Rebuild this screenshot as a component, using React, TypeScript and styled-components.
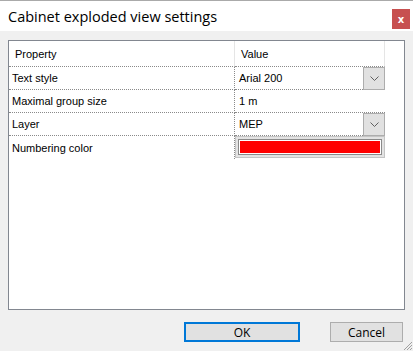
import React from "react";
import styled, { createGlobalStyle } from "styled-components";

const Global = createGlobalStyle`
  html, body { margin: 0; padding: 0; background: #f0f0f0; }
  * { box-sizing: border-box; }
`;

const Window = styled.div`
  width: 413px;
  height: 351px;
  display: flex;
  flex-direction: column;
  background: #f0f0f0;
  border-top: 1px solid #aaaaaa;
  position: relative;
  overflow: hidden;
  font-family: "Liberation Sans", Arial, sans-serif;
`;

const TitleBar = styled.div`
  height: 30px;
  background: #ffffff;
  display: flex;
  align-items: center;
  justify-content: space-between;
  padding: 0 3px 0 8px;
`;

const Title = styled.div`
  font-family: "Open Sans", sans-serif;
  font-size: 14.5px;
  color: #000;
  margin-top: 1px;
`;

const CloseButton = styled.div`
  width: 18px;
  height: 20px;
  margin-right: 0px;
  margin-top: 6px;
  background: #c75050;
  color: #fff;
  font-family: "DejaVu Sans", sans-serif;
  font-weight: bold;
  font-size: 10px;
  display: flex;
  align-items: center;
  justify-content: center;
`;

const Body = styled.div`
  flex: 1;
  display: flex;
  flex-direction: column;
  padding: 9px 8px 0 8px;
`;

const Panel = styled.div`
  height: 270px;
  width: 397px;
  background: #fff;
  border: 1px solid #828790;
`;

const Grid = styled.div`
  display: grid;
  grid-template-columns: 226px 150px 1fr;
  font-family: "Liberation Sans", Arial, sans-serif;
  font-size: 11px;
  color: #000;
`;

const HeadCell = styled.div<{ $last?: boolean }>`
  height: 26px;
  padding-left: ${(p) => (p.$last ? 0 : 6)}px;
  display: flex;
  align-items: center;
  border-bottom: ${(p) => (p.$last ? "none" : "1px dotted #8a8a8a")};
  border-right: ${(p) => (p.$last ? "none" : "1px solid #e5e5e5")};
`;

const Cell = styled.div<{ $left?: boolean; $noLine?: boolean }>`
  height: 23px;
  padding-left: ${(p) => (p.$left ? 3 : 4)}px;
  display: flex;
  align-items: center;
  position: relative;
  border-bottom: ${(p) => (p.$noLine ? "none" : "1px dotted #8a8a8a")};
  border-right: ${(p) => (p.$left ? "1px dotted #8a8a8a" : "none")};
`;

const Spacer = styled.div``;

const DropButton = styled.div`
  position: absolute;
  right: 0;
  top: 0;
  width: 22px;
  height: 23px;
  background: #e1e1e1;
  border: 1px solid #adadad;
  display: flex;
  align-items: center;
  justify-content: center;
`;

const Swatch = styled.div`
  position: absolute;
  left: 0;
  top: 0;
  width: 150px;
  height: 22px;
  border: 1px solid #c4c4c4;
  background: #e3e3e3;
  padding: 2px;
`;

const SwatchInner = styled.div`
  width: 100%;
  height: 100%;
  border: 1px solid #8a8a8a;
  background: #fff;
  padding: 1px;
`;

const SwatchColor = styled.div<{ $color: string }>`
  width: 100%;
  height: 100%;
  background: ${(p) => p.$color};
`;

const Footer = styled.div`
  display: flex;
  justify-content: flex-end;
  gap: 30px;
  padding: 12px 2px 0 0;
`;

const Button = styled.div<{ $w: number; $default?: boolean }>`
  width: ${(p) => p.$w}px;
  height: 20px;
  background: #e1e1e1;
  border: ${(p) => (p.$default ? "2px solid #0078d7" : "1px solid #adadad")};
  display: flex;
  align-items: center;
  justify-content: center;
  font-family: "Open Sans", sans-serif;
  font-size: 12px;
  color: #000;
`;

const Grip = styled.svg`
  position: absolute;
  right: 0;
  bottom: 0;
`;

const Chevron = () => (
  <svg width="9" height="5" viewBox="0 0 9 5">
    <path d="M0.5 0.5 L4.5 4.5 L8.5 0.5" fill="none" stroke="#606060" strokeWidth="1" />
  </svg>
);

const rows: { name: string; value: string; kind: "drop" | "text" | "color" }[] = [
  { name: "Text style", value: "Arial 200", kind: "drop" },
  { name: "Maximal group size", value: "1 m", kind: "text" },
  { name: "Layer", value: "MEP", kind: "drop" },
  { name: "Numbering color", value: "", kind: "color" },
];

export default function App() {
  return (
    <>
      <Global />
      <Window>
        <TitleBar>
          <Title>Cabinet exploded view settings</Title>
          <CloseButton>x</CloseButton>
        </TitleBar>
        <Body>
          <Panel>
            <Grid>
              <HeadCell>Property</HeadCell>
              <HeadCell>Value</HeadCell>
              <HeadCell $last />
              {rows.map((r, i) => {
                const last = i === rows.length - 1;
                return (
                  <React.Fragment key={r.name}>
                    <Cell $left $noLine={last}>{r.name}</Cell>
                    <Cell $noLine={last}>
                      {r.kind !== "color" && r.value}
                      {r.kind === "drop" && (
                        <DropButton>
                          <Chevron />
                        </DropButton>
                      )}
                      {r.kind === "color" && (
                        <Swatch>
                          <SwatchInner>
                            <SwatchColor $color="#ff0000" />
                          </SwatchInner>
                        </Swatch>
                      )}
                    </Cell>
                    <Spacer />
                  </React.Fragment>
                );
              })}
            </Grid>
          </Panel>
          <Footer>
            <Button $w={116} $default>OK</Button>
            <Button $w={73}>Cancel</Button>
          </Footer>
        </Body>
        <Grip width="12" height="12" viewBox="0 0 12 12">
          <path d="M11 3 L3 11 M11 6 L6 11 M11 9 L9 11" stroke="#a0a0a0" strokeWidth="1" />
        </Grip>
      </Window>
    </>
  );
}
